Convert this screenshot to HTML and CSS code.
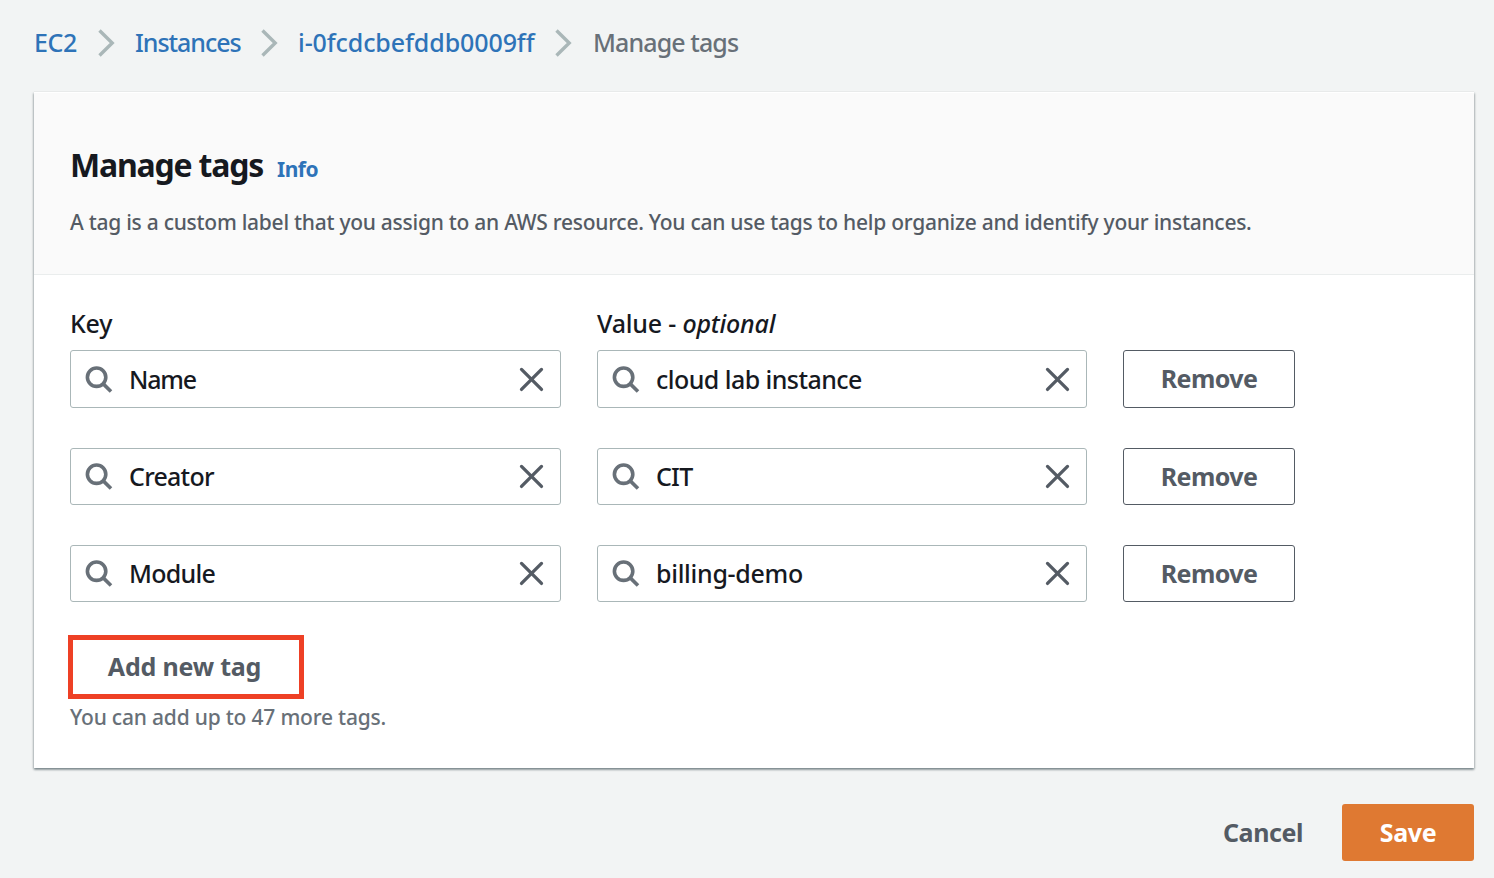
FILE: index.html
```
<!DOCTYPE html>
<html lang="en">
<head>
<meta charset="utf-8">
<title>Manage tags</title>
<link rel="stylesheet" href="styles.css">
</head>
<body>
<svg class="sprite" aria-hidden="true">
  <symbol id="chevron" viewBox="0 0 18 28"><path d="M1.5 1.5 L14.2 14 L1.5 26.5" fill="none" stroke="#aab7b8" stroke-width="3.4"/></symbol>
  <symbol id="search" viewBox="0 0 28 28"><circle cx="11.6" cy="12.2" r="9.2" fill="none" stroke="#687078" stroke-width="3.6"/><path d="M18 18.6 L26 26.5" stroke="#687078" stroke-width="3.6"/></symbol>
  <symbol id="close" viewBox="0 0 26 26"><path d="M2.5 3.4 L22.5 23.4 M22.5 3.4 L2.5 23.4" stroke="#545b64" stroke-width="3.3" stroke-linecap="round"/></symbol>
</svg>
<nav class="crumbs">
  <a class="c1">EC2</a><svg class="chev"><use href="#chevron"/></svg>
  <a class="c2">Instances</a><svg class="chev"><use href="#chevron"/></svg>
  <a class="c3">i-0fcdcbefddb0009ff</a><svg class="chev"><use href="#chevron"/></svg>
  <span class="c4">Manage tags</span>
</nav>
<main class="card">
  <header class="head">
    <div class="title"><h1>Manage tags</h1><a class="info">Info</a></div>
    <p class="desc">A tag is a custom label that you assign to an AWS resource. You can use tags to help organize and identify your instances.</p>
  </header>
  <div class="labels"><span class="key">Key</span><span class="val">Value - <i>optional</i></span></div>
  <div class="rows">
    <div class="field first"><svg class="mag"><use href="#search"/></svg><span class="t-name">Name</span><svg class="x"><use href="#close"/></svg></div>
    <div class="field first"><svg class="mag"><use href="#search"/></svg><span class="t-cloud">cloud lab instance</span><svg class="x"><use href="#close"/></svg></div>
    <button class="remove">Remove</button>
    <div class="field"><svg class="mag"><use href="#search"/></svg><span class="t-creator">Creator</span><svg class="x"><use href="#close"/></svg></div>
    <div class="field"><svg class="mag"><use href="#search"/></svg><span class="t-cit">CIT</span><svg class="x"><use href="#close"/></svg></div>
    <button class="remove">Remove</button>
    <div class="field"><svg class="mag"><use href="#search"/></svg><span class="t-module">Module</span><svg class="x"><use href="#close"/></svg></div>
    <div class="field"><svg class="mag"><use href="#search"/></svg><span class="t-billing">billing-demo</span><svg class="x"><use href="#close"/></svg></div>
    <button class="remove">Remove</button>
  </div>
  <button class="add">Add new tag</button>
  <p class="hint">You can add up to 47 more tags.</p>
</main>
<footer class="actions"><button class="cancel">Cancel</button><button class="save">Save</button></footer>
</body>
</html>
```
FILE: styles.css
```
* { box-sizing: border-box; margin: 0; padding: 0; }
body { background: #f2f4f4; font-family: "Noto Sans", "Open Sans", sans-serif; font-size: 25px; font-weight: 460; color: #16191f; width: 1494px; height: 878px; overflow: hidden; white-space: nowrap; }
.sprite { display: none; }
button { font: inherit; font-weight: 700; color: #545b64; background: #fff; }
.crumbs { display: flex; align-items: center; height: 92px; padding: 0 0 7px 34px; color: #687078; }
.crumbs a, .info { color: #2e73b8; }
.crumbs a, .crumbs span { padding-bottom: 1px; flex: none; }
.c1 { width: 43px; letter-spacing: -0.4px; }
.c2 { width: 106px; letter-spacing: -1.05px; }
.c3 { width: 237px; letter-spacing: -0.1px; }
.c4 { letter-spacing: -0.9px; }
.chev { width: 18px; height: 28px; margin: 0 20px 0 20px; flex: none; }
.c1 + .chev { margin-left: 21px; margin-right: 19px; }
.c2 + .chev { margin-right: 19px; }
.card { margin-left: 34px; width: 1440px; height: 676px; background: #fff; box-shadow: 0 -1px 0 #e8eaea, 0 2px 2px rgba(0,28,36,.3), 1px 1px 2px rgba(0,28,36,.18), -1px 1px 2px rgba(0,28,36,.18); }
.head { height: 183px; background: #fafafa; border-top: 1px solid #fff; border-bottom: 1px solid #eaeded; padding: 50px 36px 0; }
.title { display: flex; align-items: baseline; height: 44px; line-height: 43px; }
h1 { font-size: 32px; width: 207px; letter-spacing: -1.2px; }
.info { font-size: 21px; font-weight: 700; letter-spacing: -0.5px; }
.desc { font-size: 21px; line-height: 30px; color: #545b64; margin-top: 20px; letter-spacing: -0.265px; }
.labels { display: grid; grid-template-columns: 491px 490px; gap: 36px; padding: 32px 36px 0; height: 75px; line-height: 32px; letter-spacing: -0.2px; }
.rows { display: grid; grid-template-columns: 491px 490px 172px; grid-template-rows: 58px 57px 57px; gap: 40px 36px; padding-left: 36px; }
.field { display: flex; align-items: center; border: 1px solid #aab7b8; border-radius: 3px; padding: 0 15px 1px 14px; }
.first { padding-bottom: 0; }
.mag { width: 28px; height: 28px; margin-right: 16px; flex: none; }
.x { width: 26px; height: 26px; margin-left: auto; flex: none; }
.t-name { letter-spacing: -1.2px; }
.t-cloud { letter-spacing: -0.55px; }
.t-creator, .t-module { letter-spacing: -0.75px; }
.t-cit { letter-spacing: -0.8px; }
.t-billing { letter-spacing: -0.3px; }
.remove { border: 1px solid #545b64; border-radius: 3px; letter-spacing: -0.6px; padding-bottom: 2px; }
.add { display: block; margin: 33px 0 0 34px; width: 236px; height: 64px; border: 5px solid #ee4025; letter-spacing: -0.2px; padding: 0 3px 2px 0; }
.hint { font-size: 21px; line-height: 30px; color: #687078; margin: 3px 0 0 36px; letter-spacing: -0.2px; }
.actions { display: flex; justify-content: flex-end; padding: 36px 20px 0 0; }
.actions button { height: 57px; border: 0; letter-spacing: -0.4px; padding-bottom: 2px; }
.actions .cancel { width: 158px; background: none; }
.actions .save { width: 132px; background: #df7932; color: #fff; border-radius: 3px; }
```
